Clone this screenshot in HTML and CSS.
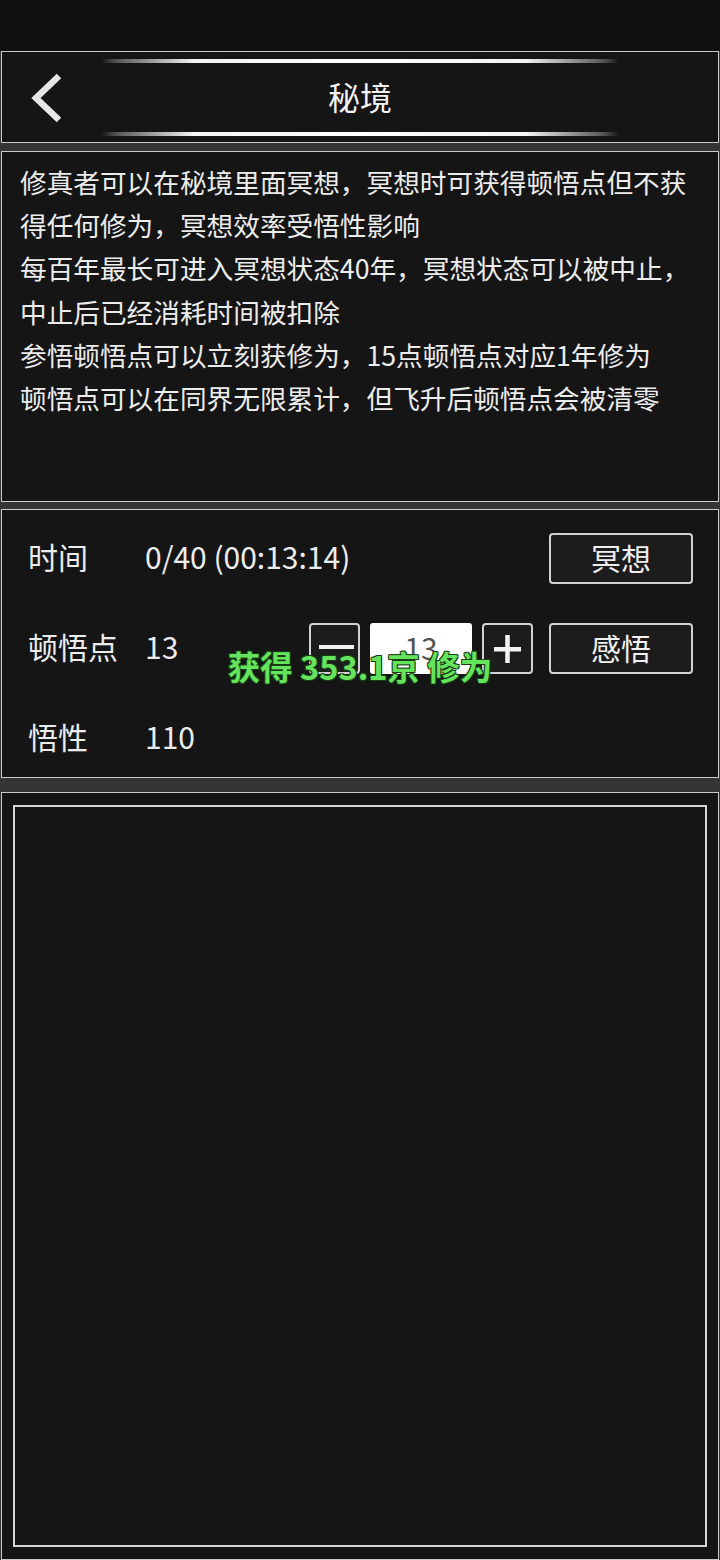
FILE: index.html
```html
<!DOCTYPE html>
<html lang="zh-CN">
<head>
<meta charset="utf-8">
<title>秘境</title>
<link rel="stylesheet" href="styles.css">
</head>
<body>
<div class="page">
  <div class="status"></div>
  <div class="bands">
    <header class="panel header">
      <div class="deco"></div>
      <div class="title-row">
        <div class="back">
          <svg width="36" height="54" viewBox="0 0 36 54"><path d="M31 5 L8 27 L31 49" fill="none" stroke="#e6e6e6" stroke-width="6.5" stroke-linejoin="miter"/></svg>
        </div>
        <div class="title">秘境</div>
        <div class="spacer"></div>
      </div>
      <div class="deco"></div>
    </header>

    <section class="panel info">
      <p class="desc">修真者可以在秘境里面冥想，冥想时可获得顿悟点但不获<br>得任何修为，冥想效率受悟性影响<br>每百年最长可进入冥想状态40年，冥想状态可以被中止，<br>中止后已经消耗时间被扣除<br>参悟顿悟点可以立刻获修为，15点顿悟点对应1年修为<br>顿悟点可以在同界无限累计，但飞升后顿悟点会被清零</p>
    </section>

    <section class="panel controls">
      <div class="row">
        <div class="label">时间</div>
        <div class="value">0/40 (00:13:14)</div>
        <button class="btn wide">冥想</button>
      </div>
      <div class="row">
        <div class="label">顿悟点</div>
        <div class="value">13</div>
        <div class="stepper">
          <button class="btn square" aria-label="减少">
            <svg width="47" height="47" viewBox="0 0 47 47"><rect x="8" y="20" width="35" height="4" fill="#f2f2f2"/></svg>
          </button>
          <input class="amount" type="text" value="13">
          <button class="btn square" aria-label="增加">
            <svg width="47" height="47" viewBox="0 0 47 47"><rect x="10" y="22" width="27" height="4.5" fill="#f2f2f2"/><rect x="21.25" y="10" width="4.5" height="28" fill="#f2f2f2"/></svg>
          </button>
        </div>
        <button class="btn wide">感悟</button>
      </div>
      <div class="row">
        <div class="label">悟性</div>
        <div class="value">110</div>
      </div>
      <div class="toast">获得 353.1京 修为</div>
    </section>

    <section class="panel log">
      <div class="log-box"></div>
    </section>
  </div>
</div>
</body>
</html>
```

FILE: styles.css
```css
* { box-sizing: border-box; }

html, body {
  margin: 0;
  padding: 0;
  background: #111111;
}

body {
  font-family: "Noto Sans CJK SC", "Noto Sans", sans-serif;
  color: #ececec;
}

.page {
  width: 720px;
  height: 1560px;
  display: flex;
  flex-direction: column;
  overflow: hidden;
}

.status {
  height: 51px;
  flex: none;
  background: #111111;
}

.bands {
  flex: 1;
  display: flex;
  flex-direction: column;
  background: #353535;
}

.panel {
  background: #151515;
  border: 1px solid #c9c9c9;
  margin: 0 1px;
  position: relative;
}

/* header */
.header {
  height: 92px;
  display: flex;
  flex-direction: column;
  margin-bottom: 8px;
}

.deco {
  height: 4px;
  margin: 7px 99px 0;
  background: linear-gradient(90deg, rgba(90,90,90,0) 0%, #555 3%, #f4f4f4 18%, #ffffff 50%, #f4f4f4 82%, #555 97%, rgba(90,90,90,0) 100%);
  border-radius: 2px;
}

.deco:last-child {
  margin: 0 99px 6px;
}

.title-row {
  flex: 1;
  display: grid;
  grid-template-columns: 99px 1fr 99px;
  align-items: center;
}

.back {
  padding-left: 26px;
  display: flex;
  align-items: center;
}

.back svg { display: block; }

.title {
  text-align: center;
  font-size: 32px;
  line-height: 40px;
  padding-bottom: 4px;
  color: #f2f2f2;
}

/* info */
.info {
  height: 351px;
  margin-bottom: 7px;
  padding: 8px 18px 0 18px;
}

.desc {
  margin: 0;
  font-size: 26.67px;
  line-height: 43.2px;
  color: #ececec;
  white-space: nowrap;
}

/* controls */
.controls {
  height: 269px;
  margin-bottom: 14px;
  padding: 23px 25px 0 26px;
  display: flex;
  flex-direction: column;
  gap: 39px;
}

.row {
  height: 51px;
  display: flex;
  align-items: center;
  font-size: 30px;
}

.label {
  width: 117px;
  flex: none;
  line-height: 40px;
  padding-bottom: 6px;
}

.value {
  flex: 1;
  line-height: 40px;
  padding-bottom: 6px;
}

.btn {
  font-family: inherit;
  color: #f0f0f0;
  background: #1c1c1c;
  border: 2px solid #d2d2d2;
  border-radius: 4px;
  padding: 0;
  height: 51px;
  display: flex;
  align-items: center;
  justify-content: center;
}

.btn.wide {
  width: 144px;
  font-size: 30px;
  padding-bottom: 4px;
}

.btn.square {
  width: 51px;
}

.btn svg { display: block; }

.stepper {
  display: flex;
  align-items: center;
  gap: 10px;
  margin-right: 16px;
}

.amount {
  width: 102px;
  height: 51px;
  border: none;
  border-radius: 3px;
  background: #ffffff;
  color: #555555;
  font-family: inherit;
  font-size: 30px;
  text-align: center;
  padding: 0 0 4px;
}

.toast {
  position: absolute;
  left: 0;
  right: 0;
  top: 136px;
  text-align: center;
  font-size: 32.5px;
  line-height: 40px;
  font-weight: 700;
  color: #66e35c;
  text-shadow: 1px 1px 0 #173d17, -1px -1px 0 #173d17, 1px -1px 0 #173d17, -1px 1px 0 #173d17;
  pointer-events: none;
}

/* log */
.log {
  flex: 1;
  padding: 12px 11px;
  display: flex;
}

.log-box {
  flex: 1;
  border: 2px solid #d6d6d6;
  background: #151515;
}
```
